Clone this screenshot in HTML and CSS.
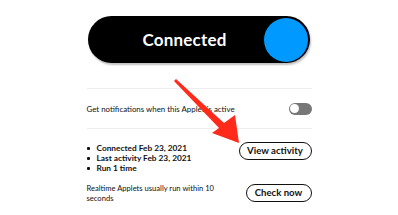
FILE: index.html
```html
<!DOCTYPE html>
<html>
<head>
<meta charset="utf-8">
<link rel="stylesheet" href="styles.css">
</head>
<body>
<div class="page">
  <div class="pill">
    <span class="pill-label">Connected</span>
    <span class="knob"></span>
  </div>
  <div class="row notify">
    <span class="notify-text">Get notifications when this Applet is active</span>
    <span class="toggle"><span class="toggle-knob"></span></span>
  </div>
  <div class="row stats">
    <ul class="list">
      <li>Connected Feb 23, 2021</li>
      <li>Last activity Feb 23, 2021</li>
      <li>Run 1 time</li>
    </ul>
    <button class="btn btn-view">View activity</button>
  </div>
  <div class="row realtime">
    <p class="rt-text">Realtime Applets usually run within 10 seconds</p>
    <button class="btn btn-check">Check now</button>
  </div>
</div>
<svg class="arrow" width="398" height="215" viewBox="0 0 398 215">
  <polygon points="174,81 176,79 224,123 235,115 239,143 212,133 219,128" fill="#ff2a1a"/>
</svg>
</body>
</html>
```
FILE: styles.css
```css
html, body {
  margin: 0;
  padding: 0;
  background: #fff;
}
body {
  font-family: Lato, "Noto Sans", sans-serif;
  color: #111;
  width: 398px;
  height: 215px;
  overflow: hidden;
  position: relative;
}
.page {
  width: 225px;
  margin: 0 auto;
  padding-top: 16px;
  display: flex;
  flex-direction: column;
}
.pill {
  width: 222px;
  height: 47px;
  margin-left: 1px;
  box-sizing: border-box;
  background: #000;
  border-radius: 24px;
  box-shadow: 1px 2px 2px rgba(0,0,0,0.25);
  display: flex;
  align-items: center;
  padding-right: 2px;
}
.pill-label {
  flex: 1;
  text-align: center;
  color: #fff;
  font-weight: 700;
  font-size: 17px;
  letter-spacing: 0.2px;
  padding-left: 18px;
}
.knob {
  width: 44px;
  height: 44px;
  border-radius: 50%;
  background: #0099ff;
  flex: none;
}
.row {
  display: flex;
  justify-content: space-between;
}
.notify {
  margin-top: 25px;
  height: 39px;
  border-top: 1px solid #eee;
  border-bottom: 1px solid #eee;
  align-items: center;
}
.notify-text {
  font-size: 7.9px;
  color: #111;
}
.toggle {
  width: 23px;
  height: 12px;
  border-radius: 6px;
  background: #777;
  display: flex;
  align-items: center;
  padding-left: 1.5px;
  box-sizing: border-box;
}
.toggle-knob {
  width: 9px;
  height: 9px;
  border-radius: 50%;
  background: #fff;
}
.stats {
  padding-top: 13px;
  align-items: flex-start;
}
.list {
  list-style: none;
  margin: 1px 0 0;
  padding: 0;
}
.list li {
  font-size: 8.3px;
  font-weight: 700;
  line-height: 10px;
  color: #111;
  padding-left: 10px;
  position: relative;
}
.list li::before {
  content: "";
  position: absolute;
  left: 0;
  top: 4px;
  width: 3px;
  height: 3px;
  background: #111;
  border-radius: 1px;
}
.btn {
  font-family: inherit;
  font-weight: 700;
  font-size: 9.6px;
  color: #111;
  background: #fff;
  border: 1.5px solid #111;
  border-radius: 10px;
  height: 18px;
  padding: 0;
  box-sizing: border-box;
  line-height: 14px;
}
.btn-view {
  width: 73px;
}
.btn-check {
  width: 66px;
}
.realtime {
  margin-top: 10px;
  align-items: center;
}
.rt-text {
  margin: 0;
  width: 140px;
  font-size: 7.6px;
  line-height: 10px;
  color: #111;
}
.arrow {
  position: absolute;
  left: 0;
  top: 0;
  pointer-events: none;
}
```
